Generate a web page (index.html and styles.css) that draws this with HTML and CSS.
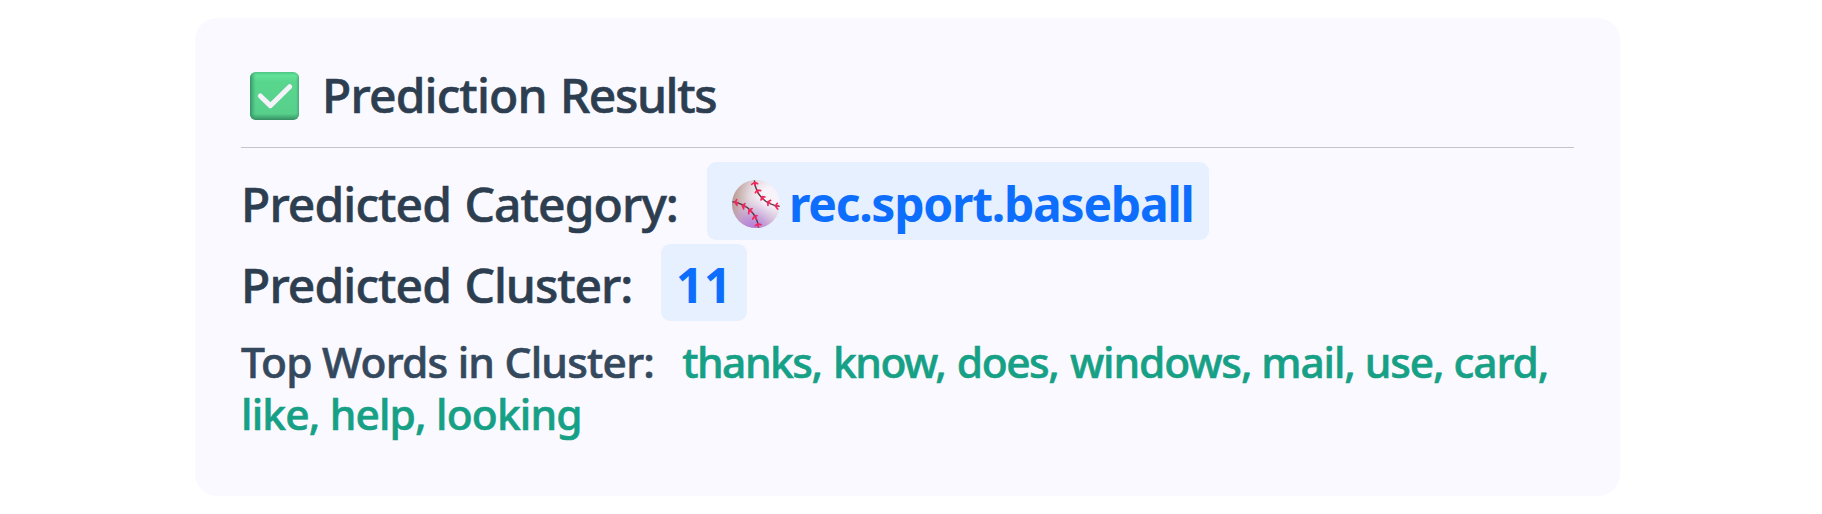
FILE: index.html
```html
<!DOCTYPE html>
<html lang="en">
<head>
<meta charset="utf-8">
<title>Prediction Results</title>
<link rel="stylesheet" href="styles.css">
</head>
<body>
<main class="card">
  <h2 class="card-title">
    <svg class="check-icon" viewBox="0 0 147 144" aria-hidden="true">
      <defs>
        <linearGradient id="gx" x1="0" x2="1" y1="0" y2="0">
          <stop offset="0" stop-color="#2f8a5f" stop-opacity=".85"/>
          <stop offset=".12" stop-color="#3aa26f" stop-opacity="0"/>
          <stop offset=".94" stop-color="#3aa26f" stop-opacity="0"/>
          <stop offset="1" stop-color="#369468" stop-opacity=".6"/>
        </linearGradient>
        <linearGradient id="gy" x1="0" x2="0" y1="0" y2="1">
          <stop offset="0" stop-color="#4cc684"/>
          <stop offset=".07" stop-color="#62e298"/>
          <stop offset=".2" stop-color="#59d68e"/>
          <stop offset=".87" stop-color="#57d08c"/>
          <stop offset="1" stop-color="#358f62"/>
        </linearGradient>
      </defs>
      <rect width="147" height="144" rx="17" fill="url(#gy)"/>
      <rect width="147" height="144" rx="17" fill="url(#gx)"/>
      <path d="M31 72 L61 101 L119 44" fill="none" stroke="#f6f2fa" stroke-width="15" stroke-linecap="round" stroke-linejoin="round"/>
    </svg>
    <span class="title-text">Prediction <span class="title-end">Results</span></span>
  </h2>
  <div class="row row-category">
    <span class="label">Predicted Category:</span>
    <span class="badge">
      <svg class="ball-icon" viewBox="0 0 144 144" aria-hidden="true">
        <defs>
          <radialGradient id="b1" cx=".8" cy=".35" r=".8">
            <stop offset=".25" stop-color="#f7f3f8"/>
            <stop offset=".55" stop-color="#e3d9df"/>
            <stop offset="1" stop-color="#b8978f"/>
          </radialGradient>
          <radialGradient id="b2" cx=".42" cy="1.05" r=".7">
            <stop offset="0" stop-color="#b573df"/>
            <stop offset=".4" stop-color="#c096dc" stop-opacity=".85"/>
            <stop offset="1" stop-color="#dcc8e4" stop-opacity="0"/>
          </radialGradient>
        </defs>
        <circle cx="72" cy="72" r="72" fill="url(#b1)"/>
        <circle cx="72" cy="72" r="72" fill="url(#b2)"/>
        <g fill="none" stroke="#4b3944" stroke-width="4">
          <path d="M67 1 C71 45 100 74 143 79"/>
          <path d="M1 65 C44 72 75 100 80 143"/>
        </g>
        <g fill="none" stroke="#f0265c" stroke-width="5" stroke-linecap="round" stroke-linejoin="round">
          <path d="M59 13 L68 7 L77 11 M68 7 L69 16"/>
          <path d="M70 38 L76 30 L86 32 M76 30 L78 39"/>
          <path d="M87 60 L90 50 L99 51 M90 50 L94 58"/>
          <path d="M108 76 L107 66 L116 61 M107 66 L114 70"/>
          <path d="M137 87 L130 78 L136 70 M130 78 L139 78"/>
          <path d="M14 59 L9 67 L15 76 M9 67 L18 68"/>
          <path d="M39 71 L31 77 L35 87 M31 77 L40 80"/>
          <path d="M60 86 L51 90 L50 101 M51 90 L59 96"/>
          <path d="M75 107 L67 109 L62 117 M67 109 L73 117"/>
          <path d="M87 134 L78 131 L70 137 M78 131 L79 140"/>
        </g>
      </svg>
      <span>rec.sport.baseball</span>
    </span>
  </div>
  <div class="row row-cluster">
    <span class="label">Predicted <span class="tight">Cluster:</span></span>
    <span class="badge"><span>11</span></span>
  </div>
  <p class="top-words"><span class="words-label">Top Words in Cluster:</span><span class="words"><span class="words-start">thanks, know, does, </span>windows, mail, use, card, <span class="words-rest">like, help, looking</span></span></p>
</main>
</body>
</html>
```
FILE: styles.css
```css
body {
  margin: 0;
  background: #fff;
  font-family: "Noto Sans", "Open Sans", sans-serif;
  font-weight: 500;
  color: #2c3e50;
}

.card {
  box-sizing: border-box;
  width: 1425px;
  height: 478px;
  margin: 18px 0 0 195px;
  padding: 46px;
  border-radius: 22px;
  background: #faf9ff;
}

.card-title {
  display: flex;
  align-items: center;
  gap: 22px;
  box-sizing: border-box;
  height: 84px;
  margin: 0;
  padding: 0 0 23px 9px;
  border-bottom: 1px solid #c5c4ca;
  font-size: 48px;
  font-weight: 500;
  line-height: 60px;
  letter-spacing: -0.85px;
  word-spacing: 1.5px;
}

.title-text,
.label,
.top-words {
  -webkit-text-stroke: 0.6px currentColor;
}

.title-text {
  padding: 2px 0 0 1px;
}

.title-end {
  letter-spacing: -1.4px;
}

.check-icon {
  width: 49px;
  height: 48px;
  margin-top: 4px;
}

.row {
  display: flex;
  font-size: 48px;
  line-height: 73px;
  white-space: nowrap;
  letter-spacing: -0.9px;
  word-spacing: 1.8px;
}

.row-category {
  height: 78px;
  margin-top: 14px;
}

.row-cluster {
  height: 77px;
  margin-top: 4px;
}

.label,
.badge {
  box-sizing: border-box;
  padding-top: 5px;
}

.row-category .label {
  width: 466px;
}

.row-cluster .label {
  width: 420px;
}

.row-cluster .label,
.row-cluster .badge {
  padding-top: 4px;
}

.tight {
  letter-spacing: -1.03px;
}

.badge {
  display: flex;
  border-radius: 9px;
  background: #e6f0ff;
  color: #0d6efd;
  font-weight: 700;
}

.row-category .badge {
  width: 502px;
  gap: 9px;
  padding-left: 25px;
  letter-spacing: -1.26px;
}

.row-cluster .badge {
  width: 86px;
  padding-left: 15px;
  letter-spacing: 0.5px;
}

.ball-icon {
  width: 48px;
  height: 48px;
  margin-top: 13px;
}

.top-words {
  margin: 15px 0 0;
  font-size: 42.5px;
  line-height: 52px;
  color: #34495e;
}

.words-label {
  margin-right: 28px;
  letter-spacing: -0.79px;
}

.words {
  color: #16a085;
  letter-spacing: -1.12px;
}

.words-start {
  letter-spacing: -1.5px;
  word-spacing: 2px;
}

.words-rest {
  letter-spacing: -0.85px;
}
```
